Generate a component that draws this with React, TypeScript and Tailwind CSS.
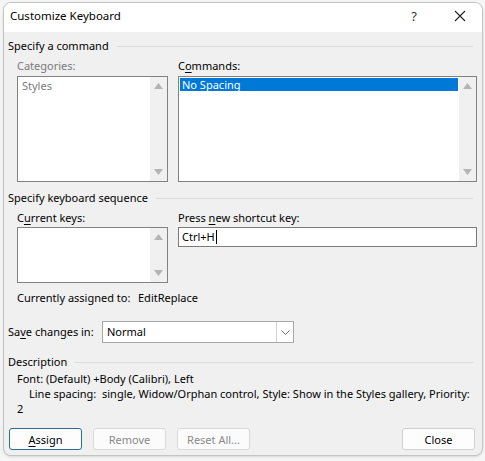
import React from 'react';

const font = { fontFamily: '"Noto Sans", "Open Sans", sans-serif' };

const SectionLabel = ({ text }: { text: string }) => (
  <div className="flex items-center h-4 pl-1 pr-[4px]">
    <span className="text-black whitespace-nowrap">{text}</span>
    <div className="flex-1 ml-2 h-px bg-[#dcdcdc]" />
  </div>
);

const ScrollBar = () => (
  <div className="w-[17px] h-full bg-[#f0f0f0] flex flex-col items-center justify-between py-[6px]">
    <svg width="9" height="6" viewBox="0 0 9 6">
      <path d="M0 6 L4.5 0 L9 6 Z" fill="#b4b4b4" />
    </svg>
    <svg width="9" height="6" viewBox="0 0 9 6">
      <path d="M0 0 L4.5 6 L9 0 Z" fill="#b4b4b4" />
    </svg>
  </div>
);

const ListBox = ({ children, h }: { children?: React.ReactNode; h: string }) => (
  <div className={`flex border border-[#828282] bg-white ${h}`}>
    <div className="flex-1 p-px">{children}</div>
    <ScrollBar />
  </div>
);

const Btn = ({ label, disabled, primary, mnemonic }: { label: string; disabled?: boolean; primary?: boolean; mnemonic?: boolean }) => (
  <button
    className={`w-[73px] h-[22px] rounded-[3px] text-[11px] leading-none ${
      primary
        ? 'border border-[#2a6f86] bg-[#fdfdfd] text-black'
        : disabled
          ? 'border border-[#d9d9d9] bg-[#fbfbfb] text-[#8a8a8a]'
          : 'border border-[#d0d0d0] bg-[#fdfdfd] text-black'
    }`}
  >
    {mnemonic ? (
      <>
        <span className="underline underline-offset-2">{label[0]}</span>
        {label.slice(1)}
      </>
    ) : (
      label
    )}
  </button>
);

export default function App() {
  return (
    <div className="w-[485px] h-[461px] bg-[#f6f6f6] pt-[2px] pl-[3px]" style={font}>
      <div className="w-[480px] h-[454px] rounded-[8px] border border-[#c4c4c4] overflow-hidden flex flex-col bg-[#f0f0f0] text-[11px] leading-4 shadow-sm">
        {/* title bar */}
        <div className="h-[29px] bg-white flex items-center pl-[6px] pr-[16px] pb-[3px]">
          <span className="text-[11.5px] text-black">Customize Keyboard</span>
          <div className="flex-1" />
          <span className="text-[13px] text-[#333] mr-[37px]">?</span>
          <svg width="12" height="12" viewBox="0 0 12 12">
            <path d="M1 1 L11 11 M11 1 L1 11" stroke="#222" strokeWidth="1.1" />
          </svg>
        </div>

        <div className="flex-1 flex flex-col pt-[6px] pr-[5px]">
          <SectionLabel text="Specify a command" />
          <div className="flex gap-[10px] pl-[13px] mt-[4px]">
            <div className="flex flex-col w-[151px]">
              <span className="text-[#7a7a7a] h-4">Categories:</span>
              <div className="mt-[2px]">
                <ListBox h="h-[106px]">
                  <div className="px-[3px] text-[#7a7a7a]">Styles</div>
                </ListBox>
              </div>
            </div>
            <div className="flex flex-col flex-1">
              <span className="h-4">
                C<span className="underline underline-offset-2">o</span>mmands:
              </span>
              <div className="mt-[2px]">
                <ListBox h="h-[106px]">
                  <div className="bg-[#0078d7] text-white px-[2px] h-[13px] leading-[13px]">No Spacing</div>
                </ListBox>
              </div>
            </div>
          </div>

          <div className="mt-[8px]">
            <SectionLabel text="Specify keyboard sequence" />
          </div>
          <div className="flex gap-[10px] pl-[13px] mt-[4px]">
            <div className="flex flex-col w-[151px]">
              <span className="h-4">
                C<span className="underline underline-offset-2">u</span>rrent keys:
              </span>
              <div className="mt-[1px]">
                <ListBox h="h-[56px]" />
              </div>
            </div>
            <div className="flex flex-col flex-1">
              <span className="h-4">
                Press <span className="underline underline-offset-2">n</span>ew shortcut key:
              </span>
              <div className="mt-[1px] h-[20px] border border-[#7a7a7a] bg-white flex items-center px-[3px]">
                <span>Ctrl+H</span>
                <span className="w-px h-[14px] bg-black ml-px" />
              </div>
            </div>
          </div>

          <div className="pl-[13px] mt-[7px] h-4 flex whitespace-nowrap">
            <span className="w-[121px]">Currently assigned to:</span>
            <span>EditReplace</span>
          </div>

          <div className="flex items-center pl-[4px] mt-[15px] h-[22px] whitespace-nowrap">
            <span className="w-[94px]">
              Sa<span className="underline underline-offset-2">v</span>e changes in:
            </span>
            <div className="w-[192px] h-[22px] border border-[#a8a8a8] bg-white flex">
              <span className="flex-1 px-[4px] leading-[20px]">Normal</span>
              <div className="w-[17px] border-l border-[#d0d0d0] flex items-center justify-center">
                <svg width="9" height="5" viewBox="0 0 9 5">
                  <path d="M0.5 0.5 L4.5 4.5 L8.5 0.5" stroke="#777" fill="none" strokeWidth="1" />
                </svg>
              </div>
            </div>
          </div>

          <div className="mt-[11px]">
            <SectionLabel text="Description" />
          </div>
          <div className="pl-[13px] pr-[4px] mt-[1px] leading-[15px]">
            <div>Font: (Default) +Body (Calibri), Left</div>
            <div className="pl-[12px] whitespace-nowrap">
              Line spacing:&nbsp; single, Widow/Orphan control, Style: Show in the Styles gallery, Priority:
            </div>
            <div>2</div>
          </div>

          <div className="flex pl-[5px] pr-[2px] mt-[12px] gap-[11px]">
            <Btn label="Assign" primary mnemonic />
            <Btn label="Remove" disabled />
            <Btn label="Reset All..." disabled />
            <div className="flex-1" />
            <Btn label="Close" />
          </div>
        </div>
      </div>
    </div>
  );
}
